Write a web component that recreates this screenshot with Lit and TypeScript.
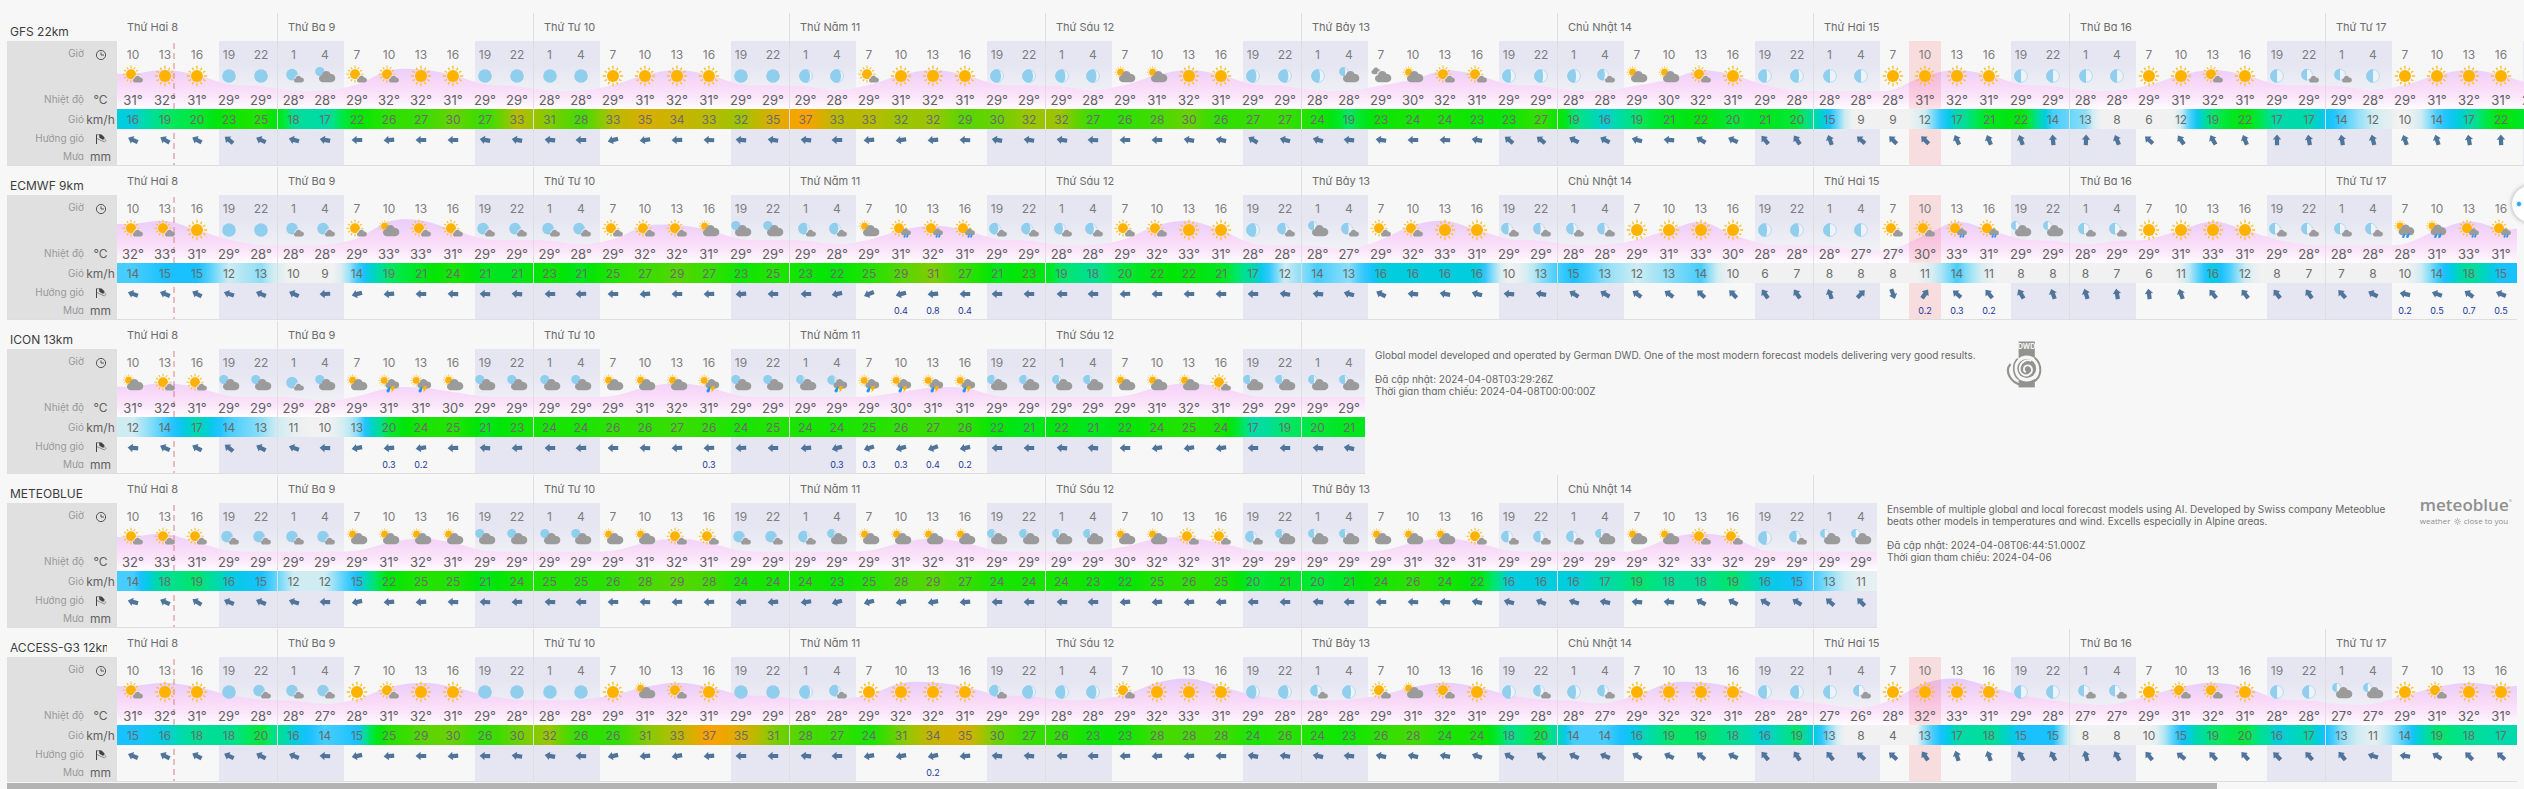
import { LitElement, html, svg, css, nothing } from "lit";
import { customElement } from "lit/decorators.js";
import { classMap } from "lit/directives/class-map.js";

const CELL = 32;
const LEGEND = 110;

interface ModelSource {
  name: string;
  icons: string;
  temp: string;
  wind: string;
  dir: string;
  rain: Record<number, string>;
  curve: [number, number];
  note?: { text: string; updated: string; reference: string; logo: "dwd" | "meteoblue" };
}

const DAYS = [
  "Thứ Hai 8", "Thứ Ba 9", "Thứ Tư 10", "Thứ Năm 11", "Thứ Sáu 12",
  "Thứ Bảy 13", "Chủ Nhật 14", "Thứ Hai 15", "Thứ Ba 16", "Thứ Tư 17",
];

/** Width of the lit bulge of the moon beyond its half, day by day. */
const MOON = [1, 1, 1, 0.6, 0.5, 0.3, 0.3, 0, 0, 0];

const HIGHLIGHT = 56;

const MODELS: ModelSource[] = [
  {
    name: "GFS 22km",
    icons: "PSSMM NBPPSSMM MMSSSSMM MMPSSSMM MMCCSSMM MBGCPPMM MNCCPSMM MMSSSSMM MMSSPSMN NMSSSSM",
    temp: "31 32 31 29 29 28 28 29 32 32 31 29 29 28 28 29 31 32 31 29 29 29 28 29 31 32 31 29 29 29 28 29 31 32 31 29 29 28 28 29 30 32 31 29 29 28 28 29 30 32 31 29 28 28 28 28 31 32 31 29 29 28 28 29 31 32 31 29 29 29 28 29 31 32 31 29",
    wind: "16 19 20 23 25 18 17 22 26 27 30 27 33 31 28 33 35 34 33 32 35 37 33 33 32 32 29 30 32 32 27 26 28 30 26 27 27 24 19 23 24 24 23 23 27 19 16 19 21 22 20 21 20 15 9 9 12 17 21 22 14 13 8 6 12 19 22 17 17 14 12 10 14 17 22 20",
    dir: "25 30 28 38 25 15 10 0 -5 0 0 10 10 5 0 -15 -8 -2 3 5 8 5 0 -5 -8 -5 3 10 8 8 3 0 0 10 12 30 15 15 5 8 0 3 10 38 38 28 28 15 5 30 25 50 55 70 40 45 45 65 68 70 85 92 68 42 55 60 68 90 80 80 75 70 72 80 88 80",
    rain: {},
    curve: [39, 5.6],
  },
  {
    name: "ECMWF 9km",
    icons: "PPSMM NNPCPPNN NNPPPCBB NNCRRRNN NNPPSSMN BNPPSSNN NNSSSSMM MMPPRRBB NNSSSSNN NNQQRR",
    temp: "32 33 31 29 28 28 28 29 33 33 31 29 29 29 28 29 32 32 31 29 29 29 28 29 31 32 31 29 29 28 28 29 32 33 31 28 28 28 27 29 32 33 31 29 29 28 28 29 31 33 30 28 28 28 27 27 30 33 31 29 29 28 29 29 31 33 31 29 28 28 28 28 31 33 31",
    wind: "14 15 15 12 13 10 9 14 19 21 24 21 21 23 21 25 27 29 27 23 25 23 22 25 29 31 27 21 23 19 18 20 22 22 21 17 12 14 13 16 16 16 16 10 13 15 13 12 13 14 10 6 7 8 8 8 11 14 11 8 8 8 7 6 11 16 12 8 7 7 8 10 14 18 15",
    dir: "20 22 28 18 22 25 -3 -15 -5 0 2 3 5 0 -3 0 -5 0 -2 -5 0 0 -12 -22 -15 -5 0 0 0 0 0 -3 0 0 0 0 8 5 15 28 5 10 15 5 10 32 30 35 35 42 45 55 55 70 135 -110 125 40 50 60 70 72 80 82 70 50 52 52 55 48 28 12 20 35 22",
    rain: { 24: "0.4", 25: "0.8", 26: "0.4", 56: "0.2", 57: "0.3", 58: "0.2", 71: "0.2", 72: "0.5", 73: "0.7", 74: "0.5" },
    curve: [40, 5.2],
  },
  {
    name: "ICON 13km",
    icons: "CPPBB NBCTTCBB BBCCCTBB BUTTTTBB BBCCCPBB BB",
    temp: "31 32 31 29 29 29 28 29 31 31 30 29 29 29 29 29 31 32 31 29 29 29 29 29 30 31 31 29 29 29 29 29 31 32 31 29 29 29 29",
    wind: "12 14 17 14 13 11 10 13 20 24 25 21 23 24 24 26 26 27 26 24 25 24 24 25 26 27 26 22 21 22 21 22 24 25 24 17 19 20 21",
    dir: "5 25 28 38 28 20 2 -10 -5 -8 -2 5 -3 0 -2 0 3 -3 -3 -3 0 -5 -15 -18 -15 -20 -12 0 0 5 5 0 -8 -8 -8 0 0 5 12",
    rain: { 8: "0.3", 9: "0.2", 18: "0.3", 22: "0.3", 23: "0.3", 24: "0.3", 25: "0.4", 26: "0.2" },
    curve: [43, 5],
    note: {
      text: "Global model developed and operated by German DWD. One of the most modern forecast models delivering very good results.",
      updated: "2024-04-08T03:29:26Z",
      reference: "2024-04-08T00:00:00Z",
      logo: "dwd",
    },
  },
  {
    name: "METEOBLUE",
    icons: "PPPNN NNCCCCBB BBCCPPNN NBCCCCBB BBCCPPNB BBCCCPNN NBCCPPMN BB",
    temp: "32 33 31 29 29 29 29 29 31 32 31 29 29 29 29 29 31 32 31 29 29 29 29 29 31 32 31 29 29 29 29 30 32 32 31 29 29 29 29 29 31 32 31 29 29 29 29 29 32 33 32 29 29 29 29",
    wind: "14 18 19 16 15 12 12 15 22 25 25 21 24 25 25 26 28 29 28 24 24 24 23 25 28 29 27 24 24 24 23 22 25 26 25 20 21 20 21 24 26 24 22 16 16 16 17 19 18 18 19 16 15 13 11",
    dir: "15 25 32 22 22 18 2 -12 -5 -5 2 3 -3 2 0 0 3 -3 -3 -5 -5 -8 -15 -15 -10 -10 -5 0 0 2 0 -5 -5 -5 -5 0 0 5 0 0 3 5 12 15 22 18 12 5 5 28 28 30 32 40 45",
    rain: {},
    curve: [44, 4.8],
    note: {
      text: "Ensemble of multiple global and local forecast models using AI. Developed by Swiss company Meteoblue beats other models in temperatures and wind. Excells especially in Alpine areas.",
      updated: "2024-04-08T06:44:51.000Z",
      reference: "2024-04-06",
      logo: "meteoblue",
    },
  },
  {
    name: "ACCESS-G3 12km",
    icons: "PSSMN NNSPSSMM MMSCPSMM MNSSSSNM MMPSSSMM NMPCPSMN MNSSSSMM MNSSSSMM NNSPPSMM BBSPSS",
    temp: "31 32 31 29 28 28 27 28 31 32 31 29 28 28 28 29 31 32 31 29 29 28 28 29 32 32 31 29 29 28 28 29 32 33 31 29 28 28 28 29 31 32 31 29 28 28 27 29 32 32 31 28 28 27 26 28 32 33 31 29 28 27 27 29 31 32 31 28 28 27 27 29 31 32 31",
    wind: "15 16 18 18 20 16 14 15 25 29 30 26 30 32 26 26 31 33 37 35 31 28 27 24 31 34 35 30 27 26 23 23 28 28 28 24 26 24 23 26 28 24 24 18 20 14 14 16 19 19 18 16 19 13 8 4 13 17 18 15 15 8 8 10 15 19 20 16 17 13 11 14 19 18 17",
    dir: "22 28 28 25 28 22 3 -12 -5 0 -5 2 8 10 3 -12 -5 -10 -5 0 0 5 0 -10 -10 -12 -5 5 5 2 0 -3 -5 -5 2 10 8 12 5 12 12 10 20 30 38 25 22 30 25 40 25 50 55 50 42 42 55 72 70 60 62 75 60 50 38 48 48 45 48 50 18 8 32 45 42",
    rain: { 25: "0.2" },
    curve: [34, 4.6],
  },
];

const WIND_SCALE: [number, number, number, number][] = [
  [0, 241, 241, 241], [10.5, 241, 241, 241], [12, 207, 236, 242], [13, 140, 222, 248],
  [14, 70, 205, 253], [15, 25, 193, 255], [16, 0, 205, 222], [17, 0, 218, 170],
  [18, 0, 222, 150], [19, 0, 230, 105], [20, 0, 232, 55], [21, 0, 230, 30],
  [22, 0, 229, 8], [24, 22, 229, 0], [26, 45, 224, 0], [28, 68, 218, 0],
  [30, 105, 210, 0], [32, 155, 197, 0], [33, 184, 186, 0], [35, 217, 174, 0],
  [37, 255, 160, 0], [40, 255, 150, 0],
];

function windColor(v: number): string {
  let k = 1;
  while (k < WIND_SCALE.length - 1 && WIND_SCALE[k][0] < v) k++;
  const a = WIND_SCALE[k - 1];
  const b = WIND_SCALE[k];
  const t = Math.min(1, Math.max(0, (v - a[0]) / (b[0] - a[0])));
  const mix = (i: number) => Math.round(a[i] + (b[i] - a[i]) * t);
  return `rgb(${mix(1)},${mix(2)},${mix(3)})`;
}

function windGradient(wind: number[], i: number): string {
  const v = wind[i];
  const p = wind[i - 1] ?? v;
  const n = wind[i + 1] ?? v;
  return `linear-gradient(90deg, ${windColor((p + v) / 2)}, ${windColor(p / 4 + (v * 3) / 4)} 25%, ${windColor(v)} 50%, ${windColor(n / 4 + (v * 3) / 4)} 75%, ${windColor((v + n) / 2)})`;
}

const hourAt = (i: number) => (10 + i * 3) % 24;
const dayAt = (i: number) => Math.floor((i + 3) / 8);
const numbers = (s: string) => s.split(" ").map(Number);

/* ---------- weather glyphs, 24 x 20 ---------- */

function sun(cx: number, cy: number, r: number) {
  const rays = [];
  for (let k = 0; k < 12; k++) {
    const a = (k * Math.PI) / 6;
    const r1 = r * 1.24;
    const r2 = r * (k % 3 === 0 ? 1.62 : 1.54);
    rays.push(svg`<line x1=${cx + r1 * Math.cos(a)} y1=${cy + r1 * Math.sin(a)} x2=${cx + r2 * Math.cos(a)} y2=${cy + r2 * Math.sin(a)} stroke="#fbc02d" stroke-width=${r * 0.22} stroke-linecap="round"></line>`);
  }
  return svg`${rays}<circle cx=${cx} cy=${cy} r=${r} fill="#ffb300"></circle>`;
}

function moon(cx: number, cy: number, r: number, bulge: number) {
  if (bulge >= 1) return svg`<circle cx=${cx} cy=${cy} r=${r} fill="#8fceed"></circle>`;
  return svg`
    <circle cx=${cx} cy=${cy} r=${r - 0.4} fill="#eef2f9" stroke="#a3d6f0" stroke-width="0.8"></circle>
    <path d="M${cx} ${cy - r}A${r} ${r} 0 0 0 ${cx} ${cy + r}A${Math.max(0.01, r * bulge)} ${r} 0 0 0 ${cx} ${cy - r}Z" fill="#8fceed"></path>`;
}

function cloud(x: number, y: number, s: number) {
  return svg`<path transform="translate(${x} ${y}) scale(${s})" fill="#9b9b9b"
    d="M4 11C1.6 11 0 9.4 0 7.4C0 5.6 1.2 4.3 2.8 4.1C3.3 1.6 4.9 0 7.2 0C9.2 0 10.7 1.1 11.4 2.9C14 2.6 16 4.4 16 6.9C16 9.3 14.3 11 12 11Z"></path>`;
}

const smallCloud = () => svg`<path fill="#f3e8f6" fill-opacity=".75" transform="translate(11.2 8.4) scale(.7)" d="M4 10.5C0 10.5 0 3.9 2.8 3.9C3.3 -1 11 -1 11.4 2.7L10 8Z"></path>${cloud(12, 9.8, 0.62)}`;
const bigCloud = () => cloud(6, 5, 1.02);

const drop = (x: number, y: number, s: number) =>
  svg`<path transform="translate(${x} ${y}) scale(${s})" fill="#2196f3" d="M2.8 0C3.2 2 2.8 4.8 1.3 4.8C-.3 4.8 -.1 3 .9 2Z"></path>`;

const storm = () => svg`${cloud(8.4, 5, 0.86)}${drop(9.4, 12.2, 1.3)}
  <path fill="#ffb300" d="M14.6 12H17.8L16.8 14.2H18L14.2 18.8L15 15.4H13.6Z"></path>`;

function glyph(code: string, bulge: number) {
  switch (code) {
    case "S": return sun(12, 10, 6);
    case "P": return svg`${sun(10, 8.2, 5)}${smallCloud()}`;
    case "R": return svg`${sun(10, 8.2, 5)}${cloud(12, 8.4, 0.62)}${drop(14.4, 14, 0.8)}${drop(17, 13.8, 0.8)}`;
    case "C": return svg`${sun(7.6, 6.2, 3.4)}${bigCloud()}`;
    case "Q": return svg`${sun(7, 6, 3.4)}${cloud(5.6, 4.4, 0.98)}${drop(9, 13.2, 1)}${drop(13, 12.8, 1.1)}`;
    case "T": return svg`${sun(7.2, 6.4, 3.4)}${storm()}`;
    case "M": return moon(12, 10, 6.8, bulge);
    case "N": return svg`${moon(10, 8.6, 5.8, bulge)}${smallCloud()}`;
    case "B": return svg`${moon(6.8, 5.6, 4.6, bulge)}${bigCloud()}`;
    case "U": return svg`${moon(7, 6, 4.6, bulge)}${storm()}`;
    case "G": return svg`${cloud(2.4, 1.6, 0.6)}<path fill="#f7f7f7" fill-opacity=".8" transform="translate(5 4)" d="M4 11C0 11 0 4.4 2.8 4.1C3.3 -1 11 -1 11.4 2.9L10 8Z"></path>${bigCloud()}`;
    default: return nothing;
  }
}

/* ---------- backdrop chart ---------- */

function curvePath(temps: number[], [base, slope]: [number, number]): string {
  const w = temps.length * CELL;
  const soft = temps.map((t, i) => t * 0.8 + ((temps[i - 1] ?? t) + (temps[i + 1] ?? t)) * 0.1);
  const pts = soft.map((t, i) => [i * CELL + CELL / 2, base - (t - 30) * slope]);
  pts.unshift([0, pts[0][1]]);
  pts.push([w, pts[pts.length - 1][1]]);
  let d = `M0 68L0 ${pts[0][1].toFixed(1)}`;
  for (let i = 0; i < pts.length - 1; i++) {
    const p0 = pts[Math.max(0, i - 1)];
    const p1 = pts[i];
    const p2 = pts[i + 1];
    const p3 = pts[Math.min(pts.length - 1, i + 2)];
    const c = [p1[0] + (p2[0] - p0[0]) / 6, p1[1] + (p2[1] - p0[1]) / 6, p2[0] - (p3[0] - p1[0]) / 6, p2[1] - (p3[1] - p1[1]) / 6, p2[0], p2[1]];
    d += `C${c.map((v) => v.toFixed(1)).join(" ")}`;
  }
  return `${d}L${w} 68Z`;
}

function nights(count: number): [number, number][] {
  const out: [number, number][] = [];
  let start = -1;
  for (let i = 0; i < count; i++) {
    if (hourAt(i) === 19) start = i * CELL + 6;
    if (hourAt(i) === 7 && start >= 0) {
      out.push([start, i * CELL + 3 - start]);
      start = -1;
    }
  }
  if (start >= 0) out.push([start, count * CELL - start]);
  return out;
}

function backdrop(temps: number[], curve: [number, number]) {
  const w = temps.length * CELL;
  return html`<svg class="backdrop" width=${w} height="124" aria-hidden="true">
    <defs>
      <linearGradient id="heat" gradientUnits="userSpaceOnUse" x1="0" y1="24" x2="0" y2="68">
        <stop offset="0" stop-color="#e8cdfb"></stop>
        <stop offset=".45" stop-color="#f8d9f8"></stop>
        <stop offset=".75" stop-color="#fbe8fb"></stop>
        <stop offset="1" stop-color="#fffdff"></stop>
      </linearGradient>
      <linearGradient id="haze" x1="0" y1="0" x2="0" y2="1">
        <stop offset="0" stop-color="#f7f7f7" stop-opacity="0"></stop>
        <stop offset="1" stop-color="#f7f7f7" stop-opacity=".9"></stop>
      </linearGradient>
    </defs>
    ${nights(temps.length).map(([x, nw]) => svg`<rect x=${x} y="0" width=${nw} height="124" fill="#e6e6f3"></rect>`)}
    <rect x="0" y="24" width=${w} height="44" fill="url(#haze)"></rect>
    <path d=${curvePath(temps, curve)} fill="url(#heat)"></path>
    ${temps.length > HIGHLIGHT ? svg`<rect x=${HIGHLIGHT * CELL} y="0" width=${CELL} height="124" fill="#f00" fill-opacity=".1"></rect>` : nothing}
    <line x1="57" y1="2" x2="57" y2="124" stroke="#d9808c" stroke-opacity=".5" stroke-width="2" stroke-dasharray="6 4"></line>
  </svg>`;
}

const clockIcon = html`<svg class="unit-icon" viewBox="0 0 12 12" aria-hidden="true">
  <circle cx="6" cy="6" r="4.6" fill="none" stroke="#555" stroke-width="1"></circle>
  <path d="M6 3.4V6H9" fill="none" stroke="#555" stroke-width="1"></path></svg>`;

const flagIcon = html`<svg class="unit-icon" viewBox="0 0 12 12" aria-hidden="true">
  <path d="M1.5 1.4V11" stroke="#444" stroke-width="1"></path>
  <path d="M2 1.8L5 1.6L11 7.4L9.4 9L2 5.6" fill="none" stroke="#777" stroke-width=".8"></path>
  <path d="M4 1.4L6.6 1.4L9.6 4.6L8.2 7L4.4 4.8Z" fill="#444"></path></svg>`;

const dwdLogo = html`<svg class="dwd" viewBox="0 0 40 52" role="img" aria-label="DWD">
  <rect x="14" y="1" width="18" height="51" fill="#92928e"></rect>
  <text x="23" y="9" text-anchor="middle" class="dwd-text">DWD</text>
  <circle cx="23" cy="31" r="14.5" fill="#f7f7f7"></circle>
  <circle cx="23" cy="31" r="10.5" fill="#92928e"></circle>
  <path d="M22 35C19 34 19 28 23.5 27.5C29 27 31 34 26 37.5C20 41 14 36 15.5 29C17 23 23 20.5 28 22.5" fill="none" stroke="#f7f7f7" stroke-width="2"></path>
  <path d="M32 19C41 27 40 41 30 46" fill="none" stroke="#92928e" stroke-width="2.2"></path>
  <path d="M5 26C-2 34 5 47 18 49.5" fill="none" stroke="#92928e" stroke-width="2.4"></path>
  <path d="M13 20C6 26 8 39 14 43" fill="none" stroke="#92928e" stroke-width="1.8"></path>
</svg>`;

const meteoblueLogo = html`<div class="brand" role="img" aria-label="meteoblue, weather close to you">
  <span class="brand-name">meteoblue<sup>®</sup></span>
  <span class="brand-tag">weather
    <svg class="brand-sun" viewBox="0 0 8 8" aria-hidden="true"><circle cx="4" cy="4" r="1.8" fill="none" stroke="#888" stroke-width=".8"></circle><path d="M4 0V1.2M4 6.8V8M0 4H1.2M6.8 4H8M1.2 1.2L2 2M6 6L6.8 6.8M1.2 6.8L2 6M6 2L6.8 1.2" stroke="#888" stroke-width=".7"></path></svg>
    close to you</span>
</div>`;

@customElement("app-root")
export class AppRoot extends LitElement {
  static styles = css`
    :host {
      display: block;
      position: relative;
      overflow: hidden;
      padding: 13px 0 0 7px;
      background: #f7f7f7;
      color: #6b6b6b;
      font-family: Inter, "Liberation Sans", sans-serif;
      font-feature-settings: "cv11";
    }
    .model {
      display: flex;
      gap: 10px;
      margin-bottom: 1px;
    }
    .chart {
      position: relative;
      flex: none;
    }
    .backdrop {
      position: absolute;
      left: 110px;
      top: 28px;
    }
    table {
      position: relative;
      table-layout: fixed;
      border-collapse: separate;
      border-spacing: 0;
    }
    th, td {
      box-sizing: border-box;
      padding: 0;
      text-align: center;
      font-weight: 400;
      white-space: nowrap;
      vertical-align: middle;
    }
    .legend-col { width: 110px; }
    tr > * { border-bottom: 0 solid #dedede; }
    .legend {
      background: #e0e0e0;
      font-size: 12px;
      line-height: 16px;
      color: #606060;
    }
    .legend-row {
      display: flex;
      align-items: center;
    }
    .label {
      width: 77px;
      text-align: right;
      font-size: 10px;
      line-height: 12px;
      padding-bottom: 3px;
      color: #999;
    }
    .unit {
      width: 33px;
      display: flex;
      justify-content: center;
    }
    .unit-icon { width: 12px; height: 12px; }
    .title {
      display: block;
      width: 97px;
      margin-left: 3px;
      overflow: hidden;
      text-align: left;
      font-size: 12px;
      line-height: 18px;
      color: #3d3d3d;
    }
    .day {
      text-align: left;
      font-size: 11px;
      line-height: 16px;
      padding-left: 10px;
      color: #6b6b6b;
    }
    .day-start { border-left: 1px solid #dedede; }
    .days > * { height: 28px; }
    .days > .title-cell { vertical-align: bottom; }
    .hours > * { height: 25px; padding-top: 2px; }
    .hours > td { font-size: 12px; color: #7d7d7d; }
    .icons > * { height: 20px; }
    .icons svg { display: block; width: 24px; height: 20px; margin: 0 auto; overflow: visible; }
    .temps > * { height: 23px; padding-top: 5px; }
    .temps > td { font-size: 13px; line-height: 16px; color: #606060; }
    .winds > * { height: 20px; padding-top: 2px; }
    .winds > td { font-size: 12px; line-height: 16px; color: #6b6b6b; }
    .dirs > * { height: 20px; }
    .dirs td svg { display: block; width: 12px; height: 12px; margin: 2px auto 0; }
    .rains > * { height: 17px; border-bottom-width: 1px; }
    .rains > td { font-size: 9px; line-height: 12px; color: #2336a0; }
    .note {
      display: flex;
      gap: 30px;
      align-items: flex-start;
      padding-right: 12px;
      font-size: 10px;
      line-height: 12px;
      color: #666;
    }
    .note p { margin: 0 0 12px; }
    .note-text { padding-top: 28px; }
    .dwd { flex: none; width: 36px; height: 48px; margin-top: 19px; }
    .dwd-text { font-size: 8px; font-weight: 700; fill: #f7f7f7; }
    .brand {
      flex: none;
      display: flex;
      flex-direction: column;
      margin-top: 20px;
      color: #8f8f8f;
      white-space: nowrap;
      font-family: "Open Sans", "Noto Sans", sans-serif;
    }
    .brand-name { font-size: 17px; line-height: 20px; font-weight: 600; }
    .brand-name sup { font-size: 4px; line-height: 0; vertical-align: 9px; }
    .brand-tag { font-size: 8px; line-height: 12px; }
    .brand-sun { width: 7px; height: 7px; margin: 0 1px -1px; }
    .fab {
      position: absolute;
      right: -24px;
      top: 186px;
      width: 36px;
      height: 36px;
      padding: 0 0 0 4px;
      border: 0;
      border-radius: 50%;
      background: #fff;
      box-shadow: 0 0 5px rgba(0, 0, 0, 0.35);
      text-align: left;
    }
    .fab svg { display: block; width: 6px; height: 6px; }
    .scroll {
      width: 87.8%;
      height: 6px;
      margin-top: 1px;
      background: #b3b3b3;
    }
  `;

  private legend(label: string, unit: unknown) {
    return html`<th class="legend" scope="row"><div class="legend-row"><span class="label">${label}</span><span class="unit">${unit}</span></div></th>`;
  }

  private renderModel(m: ModelSource) {
    const temps = numbers(m.temp);
    const wind = numbers(m.wind);
    const dir = numbers(m.dir);
    const icons = m.icons.replace(/ /g, "");
    const n = temps.length;
    const cols = temps.map((_, i) => i);
    const start = (i: number) => classMap({ "day-start": hourAt(i) === 1 });
    const spans: { day: number; span: number }[] = [];
    for (const i of cols) {
      const last = spans[spans.length - 1];
      if (last && last.day === dayAt(i)) last.span++;
      else spans.push({ day: dayAt(i), span: 1 });
    }
    return html`<section class="model" aria-label=${m.name}>
      <div class="chart">
        ${backdrop(temps, m.curve)}
        <table style="width:${LEGEND + n * CELL}px">
          <colgroup><col class="legend-col" /><col span=${n} /></colgroup>
          <tbody>
            <tr class="days">
              <th class="title-cell"><span class="title">${m.name}</span></th>
              ${spans.map((s) => html`<th scope="colgroup" colspan=${s.span} class=${classMap({ day: true, "day-start": s.day > 0 })}>${s.span > 2 ? DAYS[s.day] : nothing}</th>`)}
            </tr>
            <tr class="hours">${this.legend("Giờ", clockIcon)}${cols.map((i) => html`<td class=${start(i)}>${hourAt(i)}</td>`)}</tr>
            <tr class="icons">${this.legend("", nothing)}${cols.map((i) => html`<td class=${start(i)}><svg viewBox="0 0 24 20" aria-hidden="true">${glyph(icons[i], MOON[dayAt(i)])}</svg></td>`)}</tr>
            <tr class="temps">${this.legend("Nhiệt độ", "°C")}${cols.map((i) => html`<td class=${start(i)}>${temps[i]}°</td>`)}</tr>
            <tr class="winds">${this.legend("Gió", "km/h")}${cols.map((i) => html`<td class=${start(i)} style="background:${windGradient(wind, i)}">${wind[i]}</td>`)}</tr>
            <tr class="dirs">${this.legend("Hướng gió", flagIcon)}${cols.map((i) => html`<td class=${start(i)}><svg viewBox="0 0 12 12" aria-hidden="true"><path transform="rotate(${dir[i]} 6 6)" fill="#50759a" d="M.6 6L5.6 1.8V3.9H11.2V8.1H5.6V10.2Z"></path></svg></td>`)}</tr>
            <tr class="rains">${this.legend("Mưa", "mm")}${cols.map((i) => html`<td class=${start(i)}>${m.rain[i] ?? nothing}</td>`)}</tr>
          </tbody>
        </table>
      </div>
      ${m.note
        ? html`<aside class="note">
            <div class="note-text">
              <p>${m.note.text}</p>
              <p>Đã cập nhật: ${m.note.updated}<br />Thời gian tham chiếu: ${m.note.reference}</p>
            </div>
            ${m.note.logo === "dwd" ? dwdLogo : meteoblueLogo}
          </aside>`
        : nothing}
    </section>`;
  }

  render() {
    return html`
      ${MODELS.map((m) => this.renderModel(m))}
      <div class="scroll"></div>
      <button class="fab" type="button" aria-label="Menu">
        <svg viewBox="0 0 8 8" aria-hidden="true"><circle cx="4" cy="4" r="2.6" fill="#29a3f0"></circle><path d="M4 0V8M0 4H8M1 1L7 7M7 1L1 7" stroke="#29a3f0" stroke-width=".7"></path></svg>
      </button>
    `;
  }
}
